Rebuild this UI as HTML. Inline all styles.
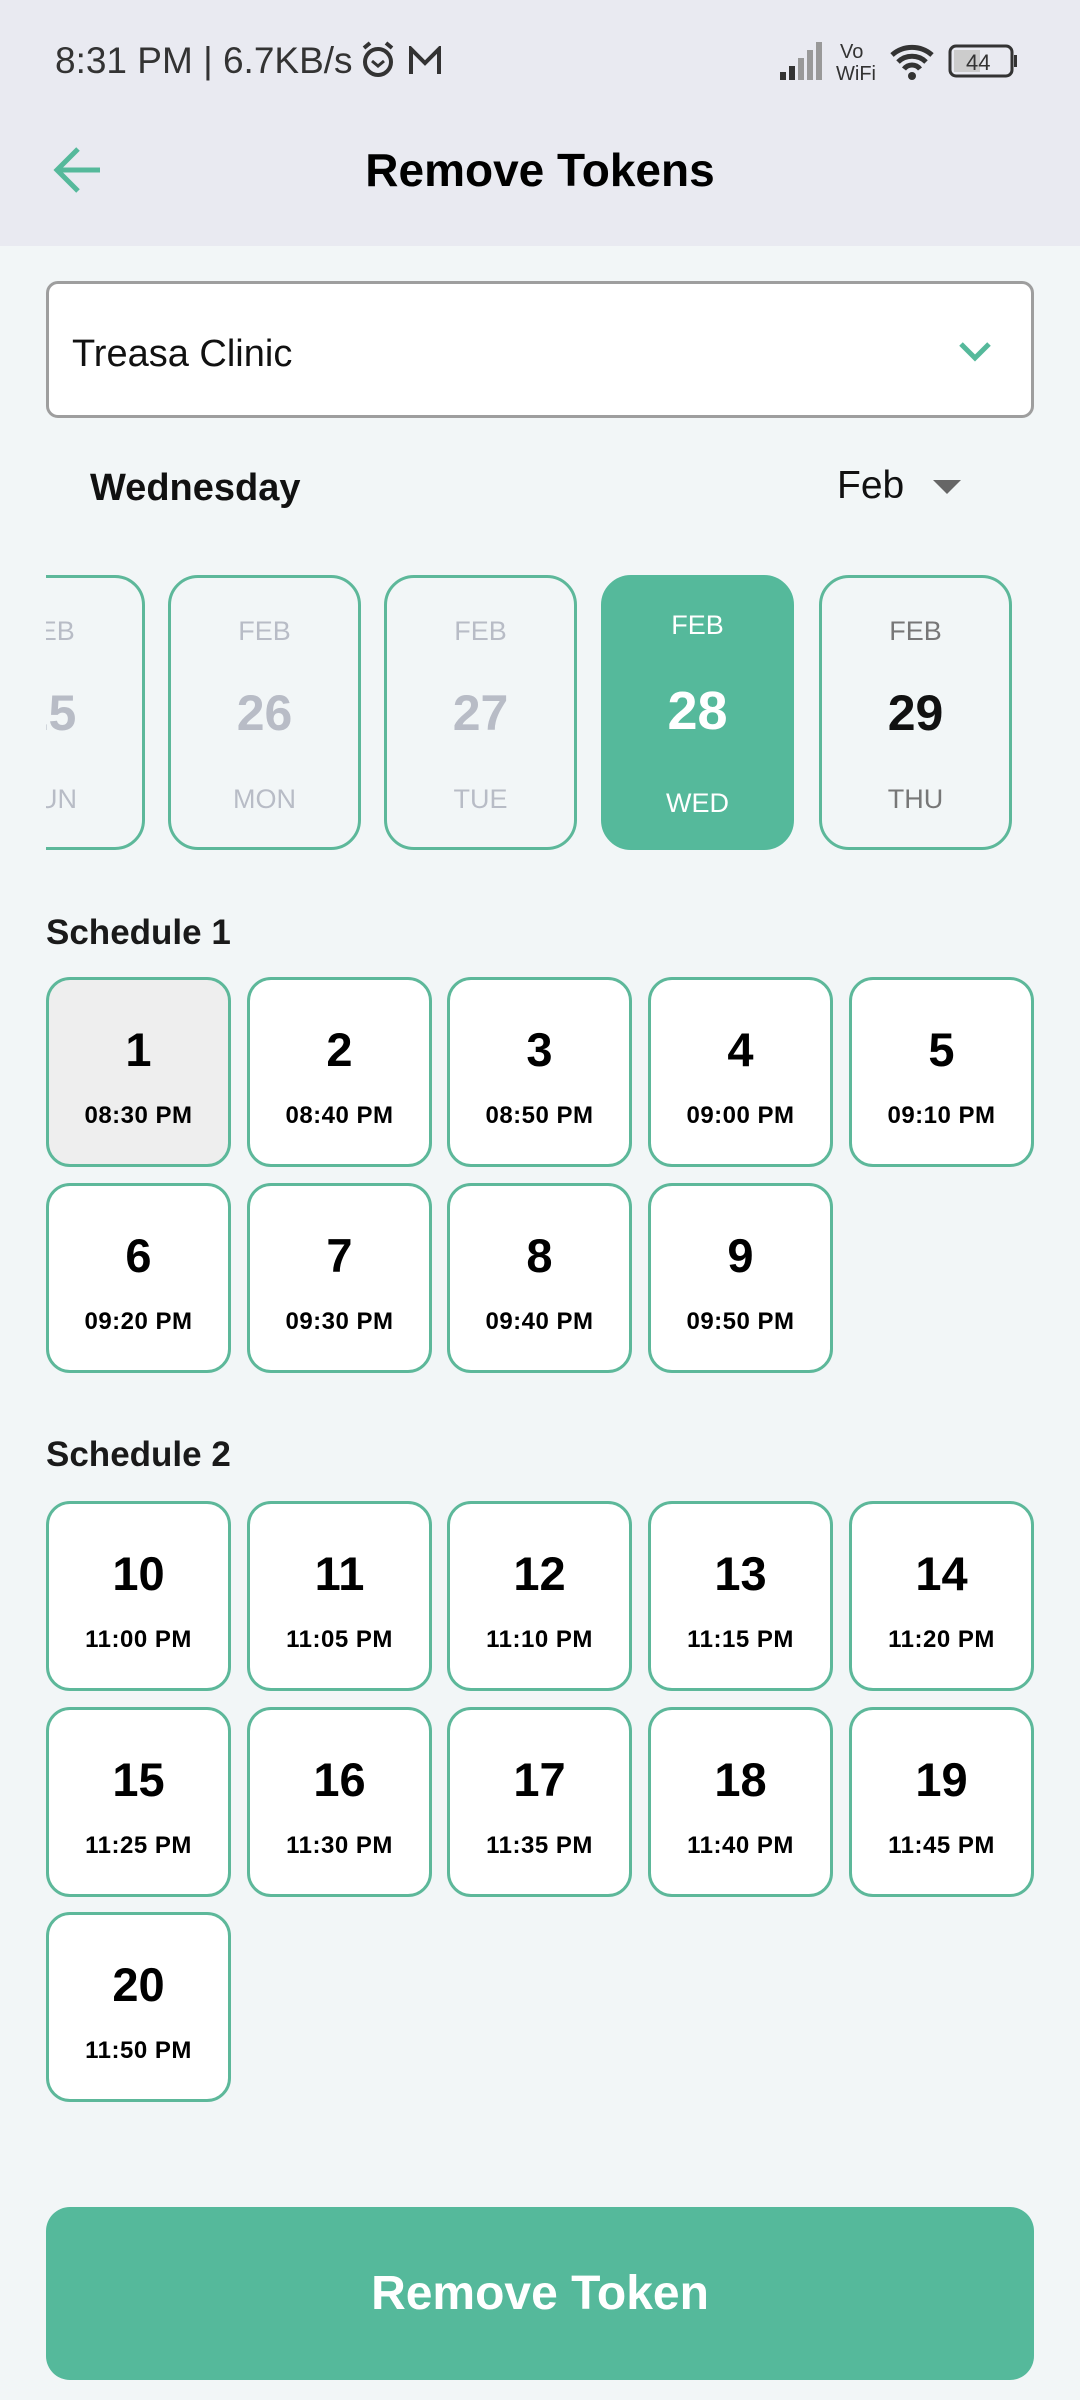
<!DOCTYPE html>
<html><head><meta charset="utf-8"><style>
*{margin:0;padding:0;box-sizing:border-box}
body{width:1080px;height:2400px;background:#f2f6f7;font-family:"Liberation Sans",sans-serif;position:relative;overflow:hidden;color:#111}
.hdr{position:absolute;left:0;top:0;width:1080px;height:246px;background:#e9eaf1}
.abs{position:absolute}
.dd{left:46px;top:281px;width:988px;height:137px;background:#fff;border:3px solid #9e9e9e;border-radius:12px}
.card{position:absolute;top:575px;width:193px;height:275px;border:3px solid #5db89a;border-radius:30px;text-align:center;color:#b8bcc6}
.card .m{position:absolute;top:38px;width:100%;font-size:27px}
.card .n{position:absolute;top:106px;width:100%;font-size:50px;font-weight:bold}
.card .d{position:absolute;top:206px;width:100%;font-size:27px}
.tok{position:absolute;width:185px;height:190px;border:3px solid #5db89a;border-radius:24px;background:#fff;text-align:center;color:#000}
.tok .n{position:absolute;top:42px;width:100%;font-size:47px;font-weight:bold}
.tok .t{position:absolute;top:122px;width:100%;font-size:24px;font-weight:bold;letter-spacing:0.5px}
.sch{position:absolute;left:46px;font-size:35px;font-weight:bold;color:#1a1a1a}
</style></head><body>
<div class="hdr"></div>
<div class="abs" style="left:55px;top:40px;font-size:37px;color:#333">8:31 PM | 6.7KB/s</div>
<svg class="abs" style="left:358px;top:40px" width="40" height="40" viewBox="0 0 40 40"><circle cx="20" cy="22" r="13" fill="none" stroke="#333" stroke-width="4"/><path d="M14 21l6 5 6-5" fill="none" stroke="#333" stroke-width="3"/><path d="M6 8l6-5M34 8l-6-5" stroke="#333" stroke-width="4"/></svg>
<svg class="abs" style="left:408px;top:46px" width="34" height="30" viewBox="0 0 34 30"><path d="M3 28V3l14 14L31 3v25" fill="none" stroke="#333" stroke-width="4"/></svg>
<svg class="abs" style="left:776px;top:38px" width="300" height="46" viewBox="0 0 300 46"><rect x="4" y="34" width="6" height="8" fill="#333"/><rect x="13" y="28" width="6" height="14" fill="#333"/><rect x="22" y="20" width="6" height="22" fill="#999"/><rect x="31" y="12" width="6" height="30" fill="#999"/><rect x="40" y="4" width="6" height="38" fill="#999"/><text x="64" y="20" font-size="20" fill="#333" font-family="Liberation Sans">Vo</text><text x="60" y="42" font-size="20" fill="#333" font-family="Liberation Sans">WiFi</text><path d="M116 17a30 30 0 0 1 40 0M122 24a20 20 0 0 1 28 0M128 31a10 10 0 0 1 16 0" fill="none" stroke="#333" stroke-width="5"/><circle cx="136" cy="38" r="4" fill="#333"/><rect x="174" y="8" width="62" height="30" rx="6" fill="none" stroke="#333" stroke-width="3"/><rect x="178" y="12" width="26" height="22" fill="#ccc"/><rect x="238" y="17" width="3" height="12" fill="#333"/><text x="190" y="32" font-size="22" fill="#333" font-family="Liberation Sans">44</text></svg>
<svg class="abs" style="left:52px;top:146px" width="50" height="50" viewBox="0 0 50 50"><path d="M26 3L5 24l21 21M5 24h43" fill="none" stroke="#55b99b" stroke-width="5"/></svg>
<div class="abs" style="left:0;width:1080px;text-align:center;top:143px;font-size:46px;font-weight:bold;color:#000">Remove Tokens</div>
<div class="abs dd"></div>
<div class="abs" style="left:72px;top:333px;font-size:38px;color:#111">Treasa Clinic</div>
<svg class="abs" style="left:958px;top:340px" width="34" height="24" viewBox="0 0 34 24"><path d="M3 4l14 14L31 4" fill="none" stroke="#55b99b" stroke-width="5"/></svg>
<div class="abs" style="left:90px;top:467px;font-size:38px;font-weight:bold;color:#111">Wednesday</div>
<div class="abs" style="left:837px;top:464px;font-size:39px;color:#111">Feb</div>
<svg class="abs" style="left:933px;top:480px" width="28" height="14"><path d="M0 0h28L14 14z" fill="#666"/></svg>
<div style="position:absolute;left:46px;top:0;width:1034px;height:900px;overflow:hidden">
<div class="card" style="left:-94px"><div class="m">FEB</div><div class="n">25</div><div class="d">SUN</div></div>
<div class="card" style="left:122px"><div class="m">FEB</div><div class="n">26</div><div class="d">MON</div></div>
<div class="card" style="left:338px"><div class="m">FEB</div><div class="n">27</div><div class="d">TUE</div></div>
<div class="card" style="left:555px;background:#55b99b;border-color:#55b99b;color:#fff"><div class="m" style="top:32px">FEB</div><div class="n" style="font-size:54px;top:102px">28</div><div class="d" style="top:210px">WED</div></div>
<div class="card" style="left:773px;color:#111"><div class="m" style="color:#777">FEB</div><div class="n">29</div><div class="d" style="color:#777">THU</div></div>
</div>
<div class="sch" style="top:894px;top:895px;transform:translateY(18px)">Schedule 1</div>
<div class="sch" style="top:1417px;transform:translateY(18px)">Schedule 2</div>
<div class="tok" style="left:46px;top:977px;background:#eee"><div class="n">1</div><div class="t">08:30 PM</div></div>
<div class="tok" style="left:247px;top:977px"><div class="n">2</div><div class="t">08:40 PM</div></div>
<div class="tok" style="left:447px;top:977px"><div class="n">3</div><div class="t">08:50 PM</div></div>
<div class="tok" style="left:648px;top:977px"><div class="n">4</div><div class="t">09:00 PM</div></div>
<div class="tok" style="left:849px;top:977px"><div class="n">5</div><div class="t">09:10 PM</div></div>
<div class="tok" style="left:46px;top:1183px"><div class="n">6</div><div class="t">09:20 PM</div></div>
<div class="tok" style="left:247px;top:1183px"><div class="n">7</div><div class="t">09:30 PM</div></div>
<div class="tok" style="left:447px;top:1183px"><div class="n">8</div><div class="t">09:40 PM</div></div>
<div class="tok" style="left:648px;top:1183px"><div class="n">9</div><div class="t">09:50 PM</div></div>
<div class="tok" style="left:46px;top:1501px"><div class="n">10</div><div class="t">11:00 PM</div></div>
<div class="tok" style="left:247px;top:1501px"><div class="n">11</div><div class="t">11:05 PM</div></div>
<div class="tok" style="left:447px;top:1501px"><div class="n">12</div><div class="t">11:10 PM</div></div>
<div class="tok" style="left:648px;top:1501px"><div class="n">13</div><div class="t">11:15 PM</div></div>
<div class="tok" style="left:849px;top:1501px"><div class="n">14</div><div class="t">11:20 PM</div></div>
<div class="tok" style="left:46px;top:1707px"><div class="n">15</div><div class="t">11:25 PM</div></div>
<div class="tok" style="left:247px;top:1707px"><div class="n">16</div><div class="t">11:30 PM</div></div>
<div class="tok" style="left:447px;top:1707px"><div class="n">17</div><div class="t">11:35 PM</div></div>
<div class="tok" style="left:648px;top:1707px"><div class="n">18</div><div class="t">11:40 PM</div></div>
<div class="tok" style="left:849px;top:1707px"><div class="n">19</div><div class="t">11:45 PM</div></div>
<div class="tok" style="left:46px;top:1912px"><div class="n">20</div><div class="t">11:50 PM</div></div>
<div class="abs" style="left:46px;top:2207px;width:988px;height:173px;background:#55b99b;border-radius:24px;color:#fff;font-size:48px;font-weight:bold;text-align:center;line-height:173px">Remove Token</div>
</body></html>
